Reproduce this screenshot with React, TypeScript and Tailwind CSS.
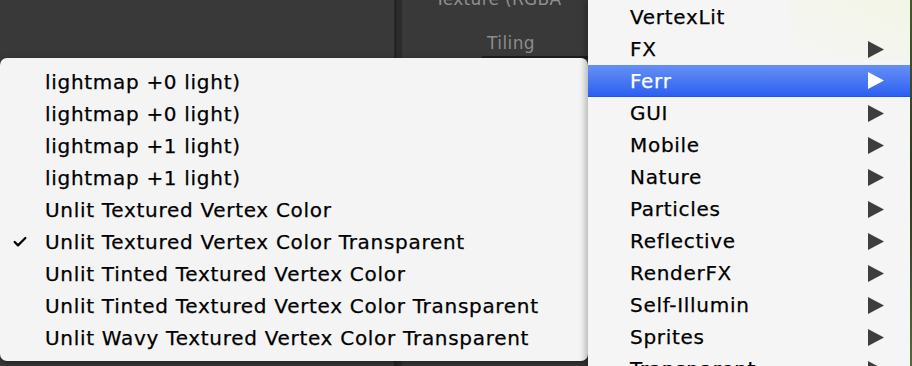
import { Check } from 'lucide-react'

const LEFT_ITEMS = [
  'lightmap +0 light)',
  'lightmap +0 light)',
  'lightmap +1 light)',
  'lightmap +1 light)',
  'Unlit Textured Vertex Color',
  'Unlit Textured Vertex Color Transparent',
  'Unlit Tinted Textured Vertex Color',
  'Unlit Tinted Textured Vertex Color Transparent',
  'Unlit Wavy Textured Vertex Color Transparent',
]
const CHECKED = 5

const RIGHT_ITEMS: { label: string; sub: boolean }[] = [
  { label: 'VertexLit', sub: false },
  { label: 'FX', sub: true },
  { label: 'Ferr', sub: true },
  { label: 'GUI', sub: true },
  { label: 'Mobile', sub: true },
  { label: 'Nature', sub: true },
  { label: 'Particles', sub: true },
  { label: 'Reflective', sub: true },
  { label: 'RenderFX', sub: true },
  { label: 'Self-Illumin', sub: true },
  { label: 'Sprites', sub: true },
  { label: 'Transparent', sub: true },
]
const ACTIVE = 2

function Arrow({ white }: { white: boolean }) {
  return (
    <svg width="16" height="17" viewBox="0 0 16 17" className="shrink-0">
      <polygon points="0,0 16,8.5 0,17" fill={white ? '#ffffff' : '#3e3e3e'} />
    </svg>
  )
}

export default function App() {
  return (
    <div className="relative w-[912px] h-[366px] overflow-hidden bg-[#393939] font-['DejaVu_Sans',sans-serif]">
      {/* Editor background */}
      <div className="flex h-full">
        <div className="w-[394px]" />
        <div className="w-[8px] bg-[#2c2c2c] border-l-[3px] border-[#262626]" />
        <div className="flex-1 flex flex-col">
          <div className="mt-[-11px] pl-[33px] text-[17px] leading-[20px] tracking-[0.3px] text-[#8f8f8f]">Texture (RGBA</div>
          <div className="mt-[24px] pl-[85px] text-[17px] leading-[20px] tracking-[0.4px] text-[#8c8c8c]">Tiling</div>
          <div className="mt-[3px] ml-[80px] h-[3px] bg-[#1f1f1f]" />
        </div>
        <div className="w-[2px] bg-gradient-to-b from-[#4a5a2c] via-[#2f3a22] to-[#5a6a3a]" />
      </div>

      {/* Left popup menu */}
      <div className="absolute left-0 top-[58px] w-[588px] h-[303px] rounded-[7px] bg-[#f4f4f4] pt-[8px] shadow-[0_2px_6px_rgba(0,0,0,0.4)]">
        {LEFT_ITEMS.map((item, i) => (
          <div key={i} className="relative h-[32px] flex items-center pl-[45px] text-[20px] tracking-[0.7px] text-black [-webkit-text-stroke:0.25px_currentColor]">
            {i === CHECKED && (
              <Check className="absolute left-[12px] top-[8px] w-[16px] h-[16px]" strokeWidth={3.4} />
            )}
            {item}
          </div>
        ))}
      </div>

      {/* Right popup menu */}
      <div className="absolute left-[588px] top-0 w-[322px] h-[380px] bg-[#f5f5f5] pt-px shadow-[-3px_0_6px_rgba(0,0,0,0.25)]">
        <div className="absolute right-0 top-0 w-[120px] h-[60px] bg-gradient-to-bl from-[#f3f5e6] to-transparent" />
        {RIGHT_ITEMS.map((item, i) => {
          const active = i === ACTIVE
          return (
            <div
              key={item.label}
              className={`relative h-[32px] flex items-center justify-between pl-[42px] pr-[26px] text-[20px] tracking-[0.7px] [-webkit-text-stroke:0.25px_currentColor] ${
                active
                  ? 'bg-gradient-to-b from-[#6790f6] to-[#2c5ff0] border-b border-[#1f55e6] text-white'
                  : 'text-black'
              }`}
            >
              <span>{item.label}</span>
              {item.sub && <Arrow white={active} />}
            </div>
          )
        })}
      </div>
    </div>
  )
}
